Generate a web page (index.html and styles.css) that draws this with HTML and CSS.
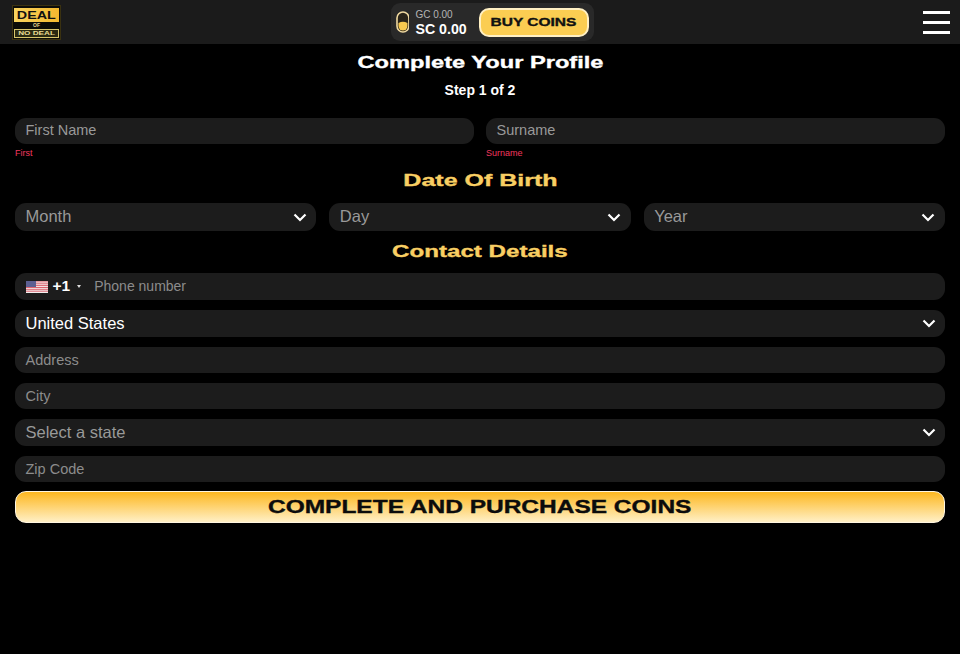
FILE: index.html
```html
<!DOCTYPE html>
<html lang="en">
<head>
    <meta charset="UTF-8">
    <meta name="viewport" content="width=device-width, initial-scale=1.0">
    <title>Complete Your Profile</title>
    <link rel="stylesheet" href="styles.css">
</head>
<body>
    <div class="topbar">
        <div class="logo">
            <div class="logo-deal"><span class="wide">DEAL</span></div>
            <div class="logo-of">OF</div>
            <div class="logo-nodeal"><span class="wide">NO DEAL</span></div>
        </div>
        <div class="wallet">
            <svg class="coin-icon" width="14" height="22" viewBox="0 0 14 22">
                <rect x="1" y="1" width="12" height="20" rx="6" fill="#2a2419" stroke="#f0d9a0" stroke-width="1.6"/>
                <path d="M2.5 12 Q7 9.5 11.5 12 V15 A4.5 4.5 0 0 1 2.5 15 Z" fill="#f8c94f"/>
            </svg>
            <div class="balances">
                <div class="gc">GC 0.00</div>
                <div class="sc">SC 0.00</div>
            </div>
            <button class="buy-btn"><span class="wide">BUY COINS</span></button>
        </div>
        <div class="menu-btn">
            <span></span>
            <span></span>
            <span></span>
        </div>
    </div>

    <div class="container">
        <h1 class="title"><span class="wide">Complete Your Profile</span></h1>
        <p class="step">Step 1 of 2</p>

        <div class="name-row">
            <div class="name-col">
                <div class="field raised placeholder">First Name</div>
                <div class="error">First</div>
            </div>
            <div class="name-col">
                <div class="field raised placeholder">Surname</div>
                <div class="error">Surname</div>
            </div>
        </div>

        <h2 class="section dob-title"><span class="wide">Date Of Birth</span></h2>
        <div class="dob-row">
            <div class="field select big raised placeholder">Month
                <svg class="chevron" width="14" height="9" viewBox="0 0 14 9"><path d="M1.5 1.5 7 7l5.5-5.5" fill="none" stroke="#fff" stroke-width="2.2"/></svg>
            </div>
            <div class="field select big raised placeholder">Day
                <svg class="chevron" width="14" height="9" viewBox="0 0 14 9"><path d="M1.5 1.5 7 7l5.5-5.5" fill="none" stroke="#fff" stroke-width="2.2"/></svg>
            </div>
            <div class="field select big raised placeholder">Year
                <svg class="chevron" width="14" height="9" viewBox="0 0 14 9"><path d="M1.5 1.5 7 7l5.5-5.5" fill="none" stroke="#fff" stroke-width="2.2"/></svg>
            </div>
        </div>

        <h2 class="section contact-title"><span class="wide">Contact Details</span></h2>
        <div class="stack">
            <div class="field phone raised">
                <svg class="flag" width="22" height="12" viewBox="0 0 22 12">
                    <rect width="22" height="12" fill="#f4eeee"/>
                    <path d="M0 .9h22M0 2.8h22M0 4.6h22M0 6.5h22M0 8.3h22M0 10.2h22" stroke="#d9636f" stroke-width="1"/>
                    <rect width="10" height="6" fill="#5c5f92"/>
                </svg>
                <span class="dial">+1</span>
                <span class="caret"></span>
                <span class="phone-text">Phone number</span>
            </div>
            <div class="field select country">United States
                <svg class="chevron" width="14" height="9" viewBox="0 0 14 9"><path d="M1.5 1.5 7 7l5.5-5.5" fill="none" stroke="#fff" stroke-width="2.2"/></svg>
            </div>
            <div class="field small placeholder">Address</div>
            <div class="field small placeholder">City</div>
            <div class="field select state placeholder">Select a state
                <svg class="chevron" width="14" height="9" viewBox="0 0 14 9"><path d="M1.5 1.5 7 7l5.5-5.5" fill="none" stroke="#fff" stroke-width="2.2"/></svg>
            </div>
            <div class="field small placeholder">Zip Code</div>
        </div>

        <button class="submit-btn"><span class="wide">COMPLETE AND PURCHASE COINS</span></button>
    </div>
</body>
</html>
```

FILE: styles.css
```css
* {
    box-sizing: border-box;
}

body {
    font-family: "Liberation Sans", Arial, sans-serif;
    margin: 0;
    padding: 0;
    background-color: #000;
    color: #fff;
    height: 654px;
    overflow: hidden;
}

/* no extended face is installed, so headings get stretched */
.wide {
    display: inline-block;
    transform: scaleX(1.36);
    white-space: nowrap;
    -webkit-text-stroke: 0.35px currentColor;
}

.topbar {
    height: 44px;
    background-color: #1b1b1b;
    display: flex;
    align-items: center;
    justify-content: space-between;
    padding: 0 10px 0 12px;
}

.logo {
    width: 49px;
    height: 35px;
    background-color: #0c0c08;
    border: 1px solid #3a3110;
    display: flex;
    flex-direction: column;
    align-items: center;
    padding: 2px 1px 0;
}

.logo-deal {
    width: 45px;
    height: 14px;
    background: linear-gradient(90deg, #f8d35f, #f4b92f);
    color: #111;
    font-size: 10.5px;
    font-weight: bold;
    line-height: 14px;
    text-align: center;
}

.logo-of {
    font-size: 5px;
    font-weight: bold;
    line-height: 7px;
    color: #e8d690;
}

.logo-nodeal {
    width: 45px;
    height: 9px;
    background-color: #2b2a12;
    border: 1px solid #d8c66c;
    color: #e9dc94;
    font-size: 6px;
    font-weight: bold;
    line-height: 7px;
    text-align: center;
}

.logo .wide {
    -webkit-text-stroke: 0;
}

.wallet {
    width: 203px;
    height: 38px;
    background-color: #292929;
    border-radius: 9px;
    display: flex;
    align-items: center;
    padding: 0 5px;
}

.coin-icon {
    margin-right: 6px;
}

.balances {
    width: 64px;
    padding-top: 1px;
}

.gc {
    font-size: 10px;
    line-height: 12px;
    color: #b5b5b5;
}

.sc {
    font-size: 14.2px;
    font-weight: bold;
    line-height: 16px;
}

.buy-btn {
    width: 110px;
    height: 29px;
    background-color: #fbcd52;
    border: 2px solid #fff0c4;
    border-radius: 10px;
    color: #111;
    font-family: inherit;
    font-size: 11px;
    font-weight: bold;
    padding: 0;
}

.buy-btn .wide {
    transform: scaleX(1.41);
}

.menu-btn {
    width: 27px;
    display: flex;
    flex-direction: column;
    gap: 7px;
}

.menu-btn span {
    height: 3px;
    background-color: #fff;
}

.container {
    padding: 0 15px;
}

.title {
    margin: 0;
    padding-top: 8.5px;
    font-size: 17px;
    line-height: 20px;
    text-align: center;
}

.title .wide {
    transform: scaleX(1.39);
}

.step {
    margin: 8.5px 0 0;
    font-size: 14px;
    font-weight: bold;
    line-height: 18px;
    text-align: center;
}

.name-row {
    display: flex;
    gap: 12px;
    margin-top: 19px;
}

.name-col {
    flex: 1;
}

.field {
    height: 26px;
    background-color: #1c1c1c;
    border-radius: 11px;
    padding: 0 10.5px;
    display: flex;
    align-items: center;
    font-size: 14.5px;
}

/* text sits a pixel above centre on these rows */
.raised {
    padding-bottom: 2px;
}

.placeholder {
    color: #999;
}

.error {
    margin-top: 3px;
    font-size: 9px;
    line-height: 12px;
    color: #f0385f;
}

.section {
    margin: 0;
    font-size: 17px;
    line-height: 20px;
    color: #f9cf63;
    text-align: center;
}

.section .wide {
    transform: scaleX(1.47);
}

.contact-title .wide {
    transform: scaleX(1.42);
}

.dob-title {
    margin-top: 12px;
}

.dob-row {
    display: flex;
    gap: 13px;
    margin-top: 12px;
}

.dob-row .field {
    flex: 1;
}

.select {
    justify-content: space-between;
}

.big {
    font-size: 16.5px;
    height: 28px;
}

.chevron {
    margin-right: -1px;
}

.raised .chevron {
    margin-top: 2px;
}

.contact-title {
    margin-top: 11px;
}

.stack {
    display: flex;
    flex-direction: column;
    gap: 10px;
    margin-top: 11px;
}

.small {
    color: #8c8c8c;
}

.phone {
    height: 27px;
    color: #8c8c8c;
    font-size: 14px;
}

.flag {
    margin-right: 5px;
    margin-top: 2px;
}

.dial {
    color: #fff;
    font-size: 15.5px;
    font-weight: bold;
}

.caret {
    width: 0;
    height: 0;
    margin: 2px 13px 0 7px;
    border-left: 2.5px solid transparent;
    border-right: 2.5px solid transparent;
    border-top: 3px solid #ddd;
}

.country {
    height: 27px;
    color: #fff;
    font-size: 16.5px;
}

.state {
    height: 27px;
    font-size: 16.5px;
}

.submit-btn {
    display: block;
    width: 100%;
    height: 32px;
    margin-top: 9px;
    background: linear-gradient(180deg, #fdb71f, #fff0c6);
    border: 1px solid #fff6e0;
    border-radius: 11px;
    color: #0c0c0c;
    font-family: inherit;
    font-size: 18px;
    font-weight: bold;
    padding: 0;
}
```
